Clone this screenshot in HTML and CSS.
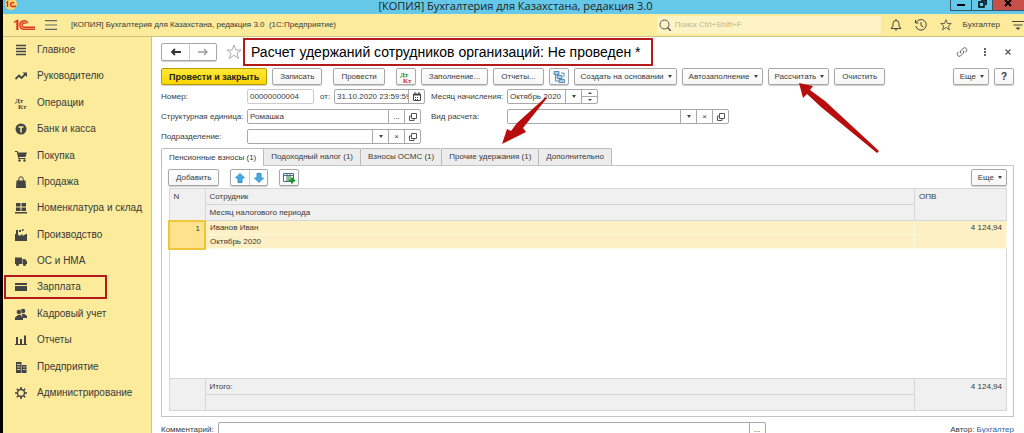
FILE: index.html
```html
<!DOCTYPE html>
<html lang="ru">

<head>
    <meta charset="UTF-8">
    <meta name="viewport" content="width=device-width, initial-scale=1.0">
    <title>[КОПИЯ] Бухгалтерия для Казахстана, редакция 3.0</title>
    <link rel="stylesheet" href="styles.css">
</head>

<body>
    <!-- shared icons -->
    <svg class="sprite" aria-hidden="true">
        <symbol id="open" viewBox="0 0 10 10">
            <path d="M3.500 1.500h5v5h-5zM3.500 4H1.500v4.500h4.500V6.500" fill="none" stroke="#555" />
        </symbol>
        <symbol id="star" viewBox="0 0 16 16">
            <path d="M8 1l2 5h5l-4 3.300 1.600 5.200L8 11.300l-4.600 3.200L5 9.300 1 6h5z" fill="none" stroke="currentColor" />
        </symbol>
    </svg>

    <div class="app">
        <header class="titlebar">
            <svg class="app-icon" viewBox="0 0 12 12">
                <circle cx="6" cy="4" r="6" fill="#fbd36b" />
                <path d="M1.500 3l1-1v5M9 3a2 2 0 1 0-1.500 3.500H11" fill="none" stroke="#d22" stroke-width="1.400" />
            </svg>
            <span class="window-title">[КОПИЯ] Бухгалтерия для Казахстана, редакция 3.0</span>
            <div class="window-buttons">
                <button aria-label="Свернуть"><svg viewBox="0 0 12 10"><path d="M2 5h8" stroke="#000" stroke-width="2" /></svg></button>
                <button aria-label="Развернуть"><svg viewBox="0 0 12 10"><path d="M3 2h5v5H3zM5 0h5v5" fill="none" stroke="#000" stroke-width="1.500" /></svg></button>
                <button class="close" aria-label="Закрыть"><svg viewBox="0 0 12 10"><path d="M3 0l6 6M9 0L3 6" stroke="#000" stroke-width="2" /></svg></button>
            </div>
        </header>

        <div class="topbar">
            <svg class="logo" viewBox="0 0 22 12">
                <path d="M1 3.500l3-2V11M4.800 1v10M15 4.200A4.200 4.200 0 1 0 11.500 10.200H22M13 4.700a2.200 2.200 0 1 0-1.500 3.600H22" fill="none" stroke="#d8361f" stroke-width="1.400" />
            </svg>
            <button class="plain burger" aria-label="Меню"><svg viewBox="0 0 11 10"><path d="M0 1h11M0 5h11M0 9h11" stroke="#666" /></svg></button>
            <span class="topbar-title">[КОПИЯ] Бухгалтерия для Казахстана, редакция 3.0&nbsp; (1С:Предприятие)</span>
            <label class="search">
                <svg viewBox="0 0 12 12"><path d="M8.500 8.500L12 12" stroke="#555" stroke-width="1.500" /><circle cx="5.500" cy="5.500" r="4.500" fill="none" stroke="#555" /></svg>
                <input type="search" placeholder="Поиск Ctrl+Shift+F" aria-label="Поиск">
            </label>
            <div class="topbar-tools">
                <button class="plain" aria-label="Уведомления"><svg viewBox="0 0 12 12"><path d="M1 9.500h10L9 7V4.500a3 3 0 0 0-6 0V7zM6 0v1.500" fill="none" stroke="#444" /><path d="M4.500 10.500h3L6 12z" fill="#444" /></svg></button>
                <button class="plain" aria-label="История"><svg viewBox="0 0 12 12"><path d="M1.200 3.500A5.300 5.300 0 1 1 .8 7M.5 1v3h3M6 3v3.500l2.500 1.500" fill="none" stroke="#444" /></svg></button>
                <button class="plain" aria-label="Избранное"><svg><use href="#star" /></svg></button>
                <span class="user">Бухгалтер</span>
                <button class="plain" aria-label="Настройки"><svg viewBox="0 0 12 12"><path d="M0 2.500h12M1.500 6h9" stroke="#444" /><path d="M3.500 8.500h5L6 11z" fill="#444" /></svg></button>
            </div>
        </div>

        <div class="workspace">
            <nav class="sidebar">
                <a href="#"><svg viewBox="0 0 12 12"><path d="M1 1.500h10M1 4.500h10M1 7.500h10M1 10.500h10" stroke="#444" stroke-width="1.600" /></svg>Главное</a>
                <a href="#"><svg viewBox="0 0 12 12"><path d="M.5 9L4 5.500l2.500 2.500L10.500 4" fill="none" stroke="#444" stroke-width="1.800" /><path d="M7.500 2.500H12V7z" fill="#444" /></svg>Руководителю</a>
                <a href="#"><svg viewBox="0 0 12 12" class="dtkt"><text x="0" y="6">Дт</text><text x="3" y="12">Кт</text></svg>Операции</a>
                <a href="#"><svg viewBox="0 0 12 12"><circle cx="6" cy="6" r="5.500" fill="#444" /><path d="M3.500 4h5M6 4v5.500" stroke="#fbeb9b" stroke-width="1.500" /></svg>Банк и касса</a>
                <a href="#"><svg viewBox="0 0 12 12"><path d="M0 1h2.500l.5 1.500h9L10.500 7H4l.3 1h6.200v1H3.500L1.800 2H0z" fill="#444" /><circle cx="4.500" cy="10.500" r="1.200" fill="#444" /><circle cx="9.500" cy="10.500" r="1.200" fill="#444" /></svg>Покупка</a>
                <a href="#"><svg viewBox="0 0 12 12"><path d="M1.500 4.500h9L11 12H1z" fill="#444" /><path d="M3.800 6V3a2.200 2.200 0 0 1 4.400 0v3" fill="none" stroke="#444" /></svg>Продажа</a>
                <a href="#"><svg viewBox="0 0 12 12"><path d="M1 1h4.500v3.500H1zM6.500 1H11v3.500H6.500zM1 5.500h4.500V9H1zM6.500 5.500H11V9H6.500zM0 10h12v1.500H0z" fill="#444" /></svg>Номенклатура и склад</a>
                <a href="#"><svg viewBox="0 0 12 12"><path d="M0 12V5h1V1h2v4l1 2 3.500-2v2L11 5l1 0v7zM4 1h2v2H4zM7 0h1.500v2H7z" fill="#444" /></svg>Производство</a>
                <a href="#"><svg viewBox="0 0 12 12"><path d="M0 2.500h7V9H0zM7.500 4H10l2 2.500V9H7.500z" fill="#444" /><circle cx="2.500" cy="9.500" r="1.500" fill="#444" /><circle cx="9.500" cy="9.500" r="1.500" fill="#444" /></svg>ОС и НМА</a>
                <a href="#" class="marked"><svg viewBox="0 0 12 12"><path d="M0 2h12v2H0zM0 5h12v5H0z" fill="#444" /></svg>Зарплата</a>
                <a href="#"><svg viewBox="0 0 12 12"><circle cx="8" cy="3" r="2.300" fill="#444" /><circle cx="4" cy="4" r="2.500" fill="#444" stroke="#fbeb9b" stroke-width=".5" /><path d="M6.500 6h3l2.500 2v2H8zM0 12V9.500L3 7h2.500L8 9.500V12z" fill="#444" /></svg>Кадровый учет</a>
                <a href="#"><svg viewBox="0 0 12 12"><path d="M1 3h2v7H1zM5 5h2v5H5zM9 1.500h2V10H9zM0 10h12v1H0z" fill="#444" /></svg>Отчеты</a>
                <a href="#"><svg viewBox="0 0 12 12"><path d="M1 1h5.500v11H1zM7 4h4.500v8H7z" fill="#444" /><path d="M2 3.500h3.500M2 6h3.500M2 8.500h3.500M8 6h2.500M8 8.500h2.500" stroke="#fbeb9b" stroke-width=".8" /></svg>Предприятие</a>
                <a href="#"><svg viewBox="0 0 12 12"><circle cx="6" cy="6" r="3.500" fill="none" stroke="#444" stroke-width="1.400" /><path d="M6 0v2M6 10v2M0 6h2M10 6h2M1.800 1.800l1.400 1.400M8.800 8.800l1.400 1.400M10.200 1.800L8.800 3.200M3.200 8.800l-1.400 1.400" stroke="#444" stroke-width="1.600" /></svg>Администрирование</a>
            </nav>

            <main class="form">
                <div class="form-head">
                    <div class="pair nav-buttons">
                        <button aria-label="Назад"><svg viewBox="0 0 12 10"><path d="M11 5H2M5 2L2 5l3 3" fill="none" stroke="#333" stroke-width="1.800" /></svg></button>
                        <button aria-label="Вперед"><svg viewBox="0 0 12 10"><path d="M1 5h9M7 2l3 3-3 3" fill="none" stroke="#999" stroke-width="1.300" /></svg></button>
                    </div>
                    <button class="plain favorite" aria-label="В избранное"><svg><use href="#star" /></svg></button>
                    <h1>Расчет удержаний сотрудников организаций: Не проведен *</h1>
                    <div class="form-tools">
                        <button class="plain" aria-label="Ссылка"><svg viewBox="0 0 12 12"><path d="M5 7.500a2.200 2.200 0 0 1 0-3L7.500 2a2.200 2.200 0 0 1 3 3L9 6.500M7 4.500a2.200 2.200 0 0 1 0 3L4.500 10a2.200 2.200 0 0 1-3-3L3 5.500" fill="none" stroke="#666" /></svg></button>
                        <button class="plain" aria-label="Еще"><svg viewBox="0 0 12 12"><path d="M5 2h2v2H5zM5 5h2v2H5zM5 8h2v2H5z" fill="#666" /></svg></button>
                        <button class="plain" aria-label="Закрыть"><svg viewBox="0 0 12 12"><path d="M3.500 3.500l5 5M8.500 3.500l-5 5" stroke="#555" stroke-width="1.200" /></svg></button>
                    </div>
                </div>

                <div class="commands">
                    <button class="btn primary">Провести и закрыть</button>
                    <button class="btn">Записать</button>
                    <button class="btn spaced">Провести</button>
                    <button class="btn icon spaced" aria-label="Проводки"><svg viewBox="0 0 12 12" class="dtkt colored"><text x="0" y="6">Дт</text><text x="3" y="12">Кт</text></svg></button>
                    <button class="btn">Заполнение...</button>
                    <button class="btn">Отчеты...</button>
                    <button class="btn icon" aria-label="Структура подчиненности"><svg viewBox="0 0 12 12"><path d="M1 .5h5v3H1zM4 4.500h5v3H4zM6 8.500h5.500v3H6z" fill="#a9cde6" stroke="#3a7ba8" stroke-width=".8" /><path d="M2.500 4v6H6M8 2h3v4" fill="none" stroke="#3a7ba8" stroke-width=".8" /></svg></button>
                    <button class="btn drop">Создать на основании<i class="caret"></i></button>
                    <button class="btn drop">Автозаполнение<i class="caret"></i></button>
                    <button class="btn drop">Рассчитать<i class="caret"></i></button>
                    <button class="btn">Очистить</button>
                    <button class="btn drop last">Еще<i class="caret"></i></button>
                    <button class="btn icon help">?</button>
                </div>

                <div class="fields">
                    <div class="field-row">
                        <div class="left">
                            <label class="name" for="number">Номер:</label>
                            <input class="box number" id="number" value="00000000004">
                            <label class="from" for="date">от:</label>
                            <div class="combo date">
                                <input id="date" value="31.10.2020 23:59:59">
                                <button aria-label="Календарь"><svg viewBox="0 0 10 10"><path d="M1.500 2h7v6.500h-7zM3 0v2M7 0v2" fill="none" stroke="#444" /><path d="M1 2h8v1.500H1zM3 5h1v1H3zM5 5h1v1H5zM3 7h1v1H3zM5 7h1v1H5z" fill="#444" /></svg></button>
                            </div>
                        </div>
                        <label class="name-right" for="month">Месяц начисления:</label>
                        <div class="combo month">
                            <input id="month" value="Октябрь 2020">
                            <button aria-label="Выбрать"><i class="caret"></i></button>
                            <button class="spin" aria-label="Изменить"><i class="caret up"></i><i class="caret"></i></button>
                        </div>
                    </div>
                    <div class="field-row">
                        <div class="left">
                            <label class="name" for="unit">Структурная единица:</label>
                            <div class="combo ref">
                                <input id="unit" value="Ромашка">
                                <button aria-label="Выбрать">...</button>
                                <button aria-label="Открыть"><svg><use href="#open" /></svg></button>
                            </div>
                        </div>
                        <label class="name-right" for="kind">Вид расчета:</label>
                        <div class="combo kind">
                            <select id="kind"><option></option></select>
                            <button aria-label="Выбрать"><i class="caret"></i></button>
                            <button aria-label="Очистить">×</button>
                            <button aria-label="Открыть"><svg><use href="#open" /></svg></button>
                        </div>
                    </div>
                    <div class="field-row">
                        <div class="left">
                            <label class="name" for="department">Подразделение:</label>
                            <div class="combo ref">
                                <select id="department"><option></option></select>
                                <button aria-label="Выбрать"><i class="caret"></i></button>
                                <button aria-label="Очистить">×</button>
                                <button aria-label="Открыть"><svg><use href="#open" /></svg></button>
                            </div>
                        </div>
                    </div>
                </div>

                <div class="tabs" role="tablist">
                    <button role="tab" class="active" aria-selected="true">Пенсионные взносы (1)</button>
                    <button role="tab">Подоходный налог (1)</button>
                    <button role="tab">Взносы ОСМС (1)</button>
                    <button role="tab">Прочие удержания (1)</button>
                    <button role="tab">Дополнительно</button>
                </div>

                <section class="panel">
                    <div class="panel-commands">
                        <button class="btn">Добавить</button>
                        <div class="pair arrows">
                            <button aria-label="Вверх"><svg viewBox="0 0 10 10"><path d="M5 .5L9.500 5H7v4.500H3V5H.5z" fill="#41aee8" stroke="#1c7fbd" stroke-width=".8" /></svg></button>
                            <button aria-label="Вниз"><svg viewBox="0 0 10 10"><path d="M5 9.500L.5 5H3V.5h4V5h2.500z" fill="#41aee8" stroke="#1c7fbd" stroke-width=".8" /></svg></button>
                        </div>
                        <button class="btn icon" aria-label="Подбор"><svg viewBox="0 0 12 12"><path d="M.5 1.500h10v8H.5zM.5 3.500h10M4 1.500v8M7 1.500v8" fill="#fff" stroke="#456f85" /><path d="M4.500 4h2v5h-2z" fill="#7cc47c" /><path d="M9 5.500v6M6 8.500h6" stroke="#189a2c" stroke-width="2" /></svg></button>
                        <button class="btn drop last">Еще<i class="caret"></i></button>
                    </div>

                    <table>
                        <thead>
                            <tr>
                                <th rowspan="2" class="col-n">N</th>
                                <th>Сотрудник</th>
                                <th rowspan="2" class="col-sum">ОПВ</th>
                            </tr>
                            <tr>
                                <th>Месяц налогового периода</th>
                            </tr>
                        </thead>
                        <tbody>
                            <tr class="selected">
                                <td rowspan="2" class="num current">1</td>
                                <td>Иванов Иван</td>
                                <td rowspan="2" class="num">4 124,94</td>
                            </tr>
                            <tr class="selected">
                                <td>Октябрь 2020</td>
                            </tr>
                            <tr class="empty">
                                <td colspan="3"></td>
                            </tr>
                        </tbody>
                        <tfoot>
                            <tr>
                                <td rowspan="2"></td>
                                <td>Итого:</td>
                                <td rowspan="2" class="num">4 124,94</td>
                            </tr>
                            <tr>
                                <td></td>
                            </tr>
                        </tfoot>
                    </table>
                </section>

                <div class="form-foot">
                    <label for="comment">Комментарий:</label>
                    <div class="combo comment">
                        <input id="comment">
                        <button aria-label="Выбрать">...</button>
                    </div>
                    <span class="author">Автор: <a href="#">Бухгалтер</a></span>
                </div>
            </main>
        </div>

        <!-- pointers over the form -->
        <svg class="pointer to-tab" viewBox="0 0 48 50"><path d="M46 1l1 1-24 30 3 4L2 48 7 33l4 2L17 27z" fill="#b80d0d" /></svg>
        <svg class="pointer to-calc" viewBox="0 0 82 72"><path d="M1 1l14 3-3 4 15 11 54 50-2 2-56-46L9 12l-4 4z" fill="#b80d0d" /></svg>
    </div>
</body>

</html>
```
FILE: styles.css
```css
:root {
    --yellow: #fbeb9b;
    --line: #a8a8a8;
    --mark: #b51a1a;
}

* {
    box-sizing: border-box;
}

body {
    margin: 0;
    font-family: "Liberation Sans", Arial, sans-serif;
    font-size: 8px;
    line-height: 12px;
    color: #3a3a3a;
    background: #fff;
}

button,
input,
select {
    font: inherit;
    color: inherit;
    margin: 0;
    padding: 0;
    border: 0;
    background: none;
    outline: 0;
    appearance: none;
}

svg {
    display: block;
    flex: none;
    width: 12px;
    height: 12px;
}

.sprite {
    display: none;
}

.app {
    position: relative;
    display: flex;
    flex-direction: column;
    height: 100vh;
    overflow: hidden;
    border-left: 3px solid #000;
}

/* window title */
.titlebar {
    display: flex;
    flex: none;
    justify-content: space-between;
    height: 14px;
    padding-left: 2px;
    background: #65c8e8;
}

.window-title {
    font-family: "Open Sans", sans-serif;
    font-size: 11px;
    line-height: 12px;
    color: #222;
    margin-left: 64px;
}

.window-buttons {
    display: flex;
    height: 11px;
}

.window-buttons button {
    display: flex;
    justify-content: center;
    width: 21px;
    border: 1px solid #2f5a6a;
    border-top: 0;
    border-right: 0;
}

.window-buttons svg {
    height: 10px;
}

.window-buttons .close {
    width: 32px;
    background: #c8504a;
}

/* program bar */
.topbar {
    display: flex;
    flex: none;
    align-items: center;
    height: 23px;
    padding-left: 10px;
    background: var(--yellow);
    border-bottom: 1px solid #cfc27c;
}

.logo {
    width: 22px;
}

.burger {
    margin: 0 14px 0 10px;
}

.topbar-title {
    flex: 1;
}

.search {
    display: flex;
    align-items: center;
    gap: 4px;
    width: 224px;
    height: 18px;
    padding-left: 2px;
    background: #fdf3c4;
}

.search input {
    flex: 1;
}

.search input::placeholder {
    color: #bdb48a;
}

.topbar-tools {
    display: flex;
    align-items: center;
    gap: 13px;
    padding-left: 9px;
}

.topbar-tools .user {
    margin: 0 -1px 0 -2px;
}

.workspace {
    display: flex;
    flex: 1;
    min-height: 0;
}

/* sections */
.sidebar {
    display: flex;
    flex: none;
    flex-direction: column;
    justify-content: space-between;
    width: 149px;
    padding-bottom: 27px;
    background: var(--yellow);
    border-right: 1px solid #cfc27c;
}

.sidebar a {
    position: relative;
    display: flex;
    align-items: center;
    gap: 10px;
    height: 26px;
    padding-left: 12px;
    font-size: 10px;
    color: #3a3a3a;
    text-decoration: none;
    white-space: nowrap;
}

.sidebar .marked::after {
    content: "";
    position: absolute;
    inset: 1px 44px 1px 1px;
    border: 2px solid var(--mark);
}

.dtkt {
    font-family: "Liberation Serif", serif;
    font-size: 7px;
    font-weight: bold;
    fill: #444;
    overflow: visible;
}

.dtkt.colored text {
    fill: #2a8a2a;
}

.dtkt.colored text + text {
    fill: #d62a2a;
}

/* document form */
.form {
    flex: 1;
    min-width: 0;
    padding: 1px 10px 0 9px;
}

.form-head {
    display: flex;
    align-items: center;
    height: 28px;
}

.pair {
    display: flex;
    border: 1px solid var(--line);
    border-radius: 2px;
    box-shadow: 0 1px 1px #ccc;
}

.pair button {
    display: flex;
    align-items: center;
    justify-content: center;
    width: 27px;
    height: 16px;
}

.pair button + button {
    border-left: 1px solid #ccc;
}

.favorite {
    margin: 0 1px 0 9px;
    color: #aaa;
}

.favorite svg {
    width: 16px;
    height: 16px;
}

h1 {
    margin: 0;
    padding: 0 10px 0 6px;
    border: 2px solid var(--mark);
    font-size: 14px;
    font-weight: normal;
    line-height: 24px;
    color: #000;
    white-space: nowrap;
}

.form-tools {
    display: flex;
    gap: 11px;
    margin-left: auto;
}

.commands,
.panel-commands {
    display: flex;
    gap: 5px;
    padding-top: 2px;
}

.btn {
    display: flex;
    align-items: center;
    justify-content: center;
    height: 17px;
    padding: 0 7px;
    border: 1px solid var(--line);
    border-radius: 2px;
    box-shadow: 0 1px 1px #ccc;
    background: linear-gradient(#fff, #f6f6f6);
    white-space: nowrap;
}

.btn.primary {
    border-color: #b79b00;
    background: linear-gradient(#ffe83a, #fbd500);
    font-size: 9px;
    font-weight: bold;
    color: #222;
}

.btn.icon {
    width: 20px;
    padding: 0;
}

.btn.drop {
    padding: 0 4px 0 6px;
}

.btn.spaced {
    margin-left: 6px;
}

.btn.last {
    margin-left: auto;
}

.btn.help {
    font-size: 10px;
    font-weight: bold;
}

.caret {
    display: inline-block;
    border: 2px solid transparent;
    border-top: 3px solid #444;
    border-bottom: 0;
}

.btn .caret {
    margin-left: 4px;
}

.fields {
    display: flex;
    flex-direction: column;
    gap: 5px;
    padding-top: 4px;
}

.field-row,
.left {
    display: flex;
    align-items: center;
}

.left {
    width: 270px;
}

.name {
    width: 86px;
    white-space: nowrap;
}

.name-right {
    width: 76px;
    white-space: nowrap;
}

.box,
.combo {
    height: 15px;
    border: 1px solid var(--line);
    border-radius: 2px;
    background: #fff;
}

.number {
    width: 67px;
    padding-left: 2px;
    border-color: #ccc;
}

.from {
    width: 20px;
    padding-left: 6px;
}

.combo {
    display: flex;
}

.combo input,
.combo select {
    flex: 1;
    min-width: 0;
    padding-left: 2px;
}

.combo button {
    display: flex;
    align-items: center;
    justify-content: center;
    width: 16px;
    border-left: 1px solid var(--line);
}

.combo svg {
    width: 10px;
    height: 10px;
}

.combo.date,
.combo.month {
    width: 91px;
}

.combo .spin {
    flex-direction: column;
    gap: 5px;
    background: linear-gradient(var(--line), var(--line)) center / 100% 1px no-repeat;
}

.caret.up {
    transform: rotate(180deg);
}

.spin .caret {
    border-top-width: 2px;
}

.combo.ref {
    width: 174px;
}

.combo.kind {
    width: 222px;
}

/* tabs */
.tabs {
    display: flex;
    position: relative;
    padding-top: 4px;
}

.tabs button {
    height: 17px;
    padding: 0 7px;
    border: 1px solid #bbb;
    border-left-width: 0;
    border-bottom: 0;
    border-radius: 0 2px 0 0;
    background: #ececec;
}

.tabs .active {
    border-left-width: 1px;
    border-radius: 2px 0 0 0;
    height: 18px;
    margin-bottom: -1px;
    background: #fff;
}

.panel {
    padding: 3px 6px 5px;
    border: 1px solid #c4c4c4;
}

.panel-commands {
    padding: 0 0 2px;
}

.arrows {
    margin: 0 6px;
}

.arrows button {
    width: 18px;
    height: 15px;
}

.arrows svg {
    width: 10px;
    height: 10px;
}

table {
    width: 100%;
    border: 1px solid var(--line);
    border-collapse: collapse;
}

th,
td {
    height: 16px;
    padding: 0 4px;
    border: 1px solid #d6d6d6;
    font-weight: normal;
    text-align: left;
    vertical-align: top;
    line-height: 15px;
}

thead,
tfoot {
    background: #f0f0f0;
}

.col-n {
    width: 36px;
}

.col-sum {
    width: 92px;
}

.selected td {
    height: 14px;
    border-color: #fff8e0;
    background: #fdf0c4;
    line-height: 13px;
}

.selected td.current {
    border: 2px solid #efc63a;
    background: #ffe28d;
}

td.num {
    text-align: right;
}

.empty td {
    height: 130px;
}

.form-foot {
    display: flex;
    align-items: center;
    padding-top: 5px;
}

.comment {
    width: 548px;
    margin-left: 4px;
}

.author {
    margin-left: auto;
}

.author a {
    color: #2a5fa8;
}

/* red pointers */
.pointer {
    position: absolute;
}

.to-tab {
    left: 497px;
    top: 96px;
    width: 48px;
    height: 50px;
}

.to-calc {
    left: 795px;
    top: 82px;
    width: 82px;
    height: 72px;
}
```
